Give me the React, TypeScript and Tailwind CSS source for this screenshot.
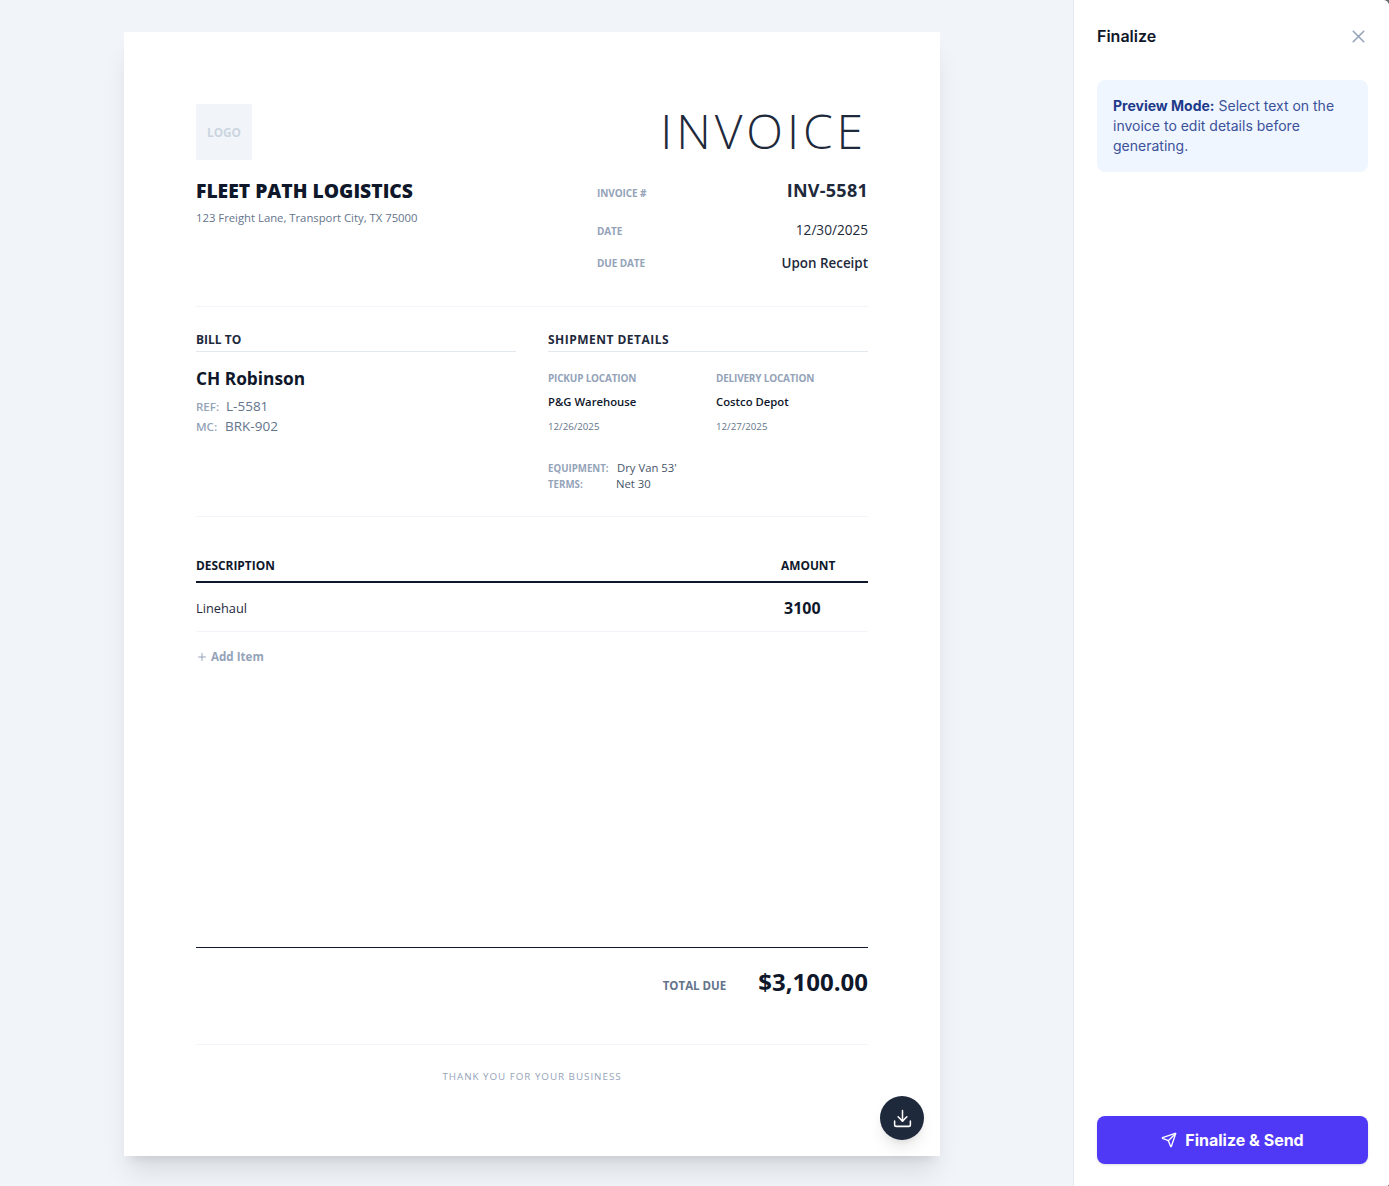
import { Download, Plus, Send, X } from "lucide-react";

const seg = "font-['Open_Sans',sans-serif]";

function MetaRow({ label, value, className, labelClass }: { label: string; value: string; className: string; labelClass: string }) {
    return (
        <div className={`flex items-center justify-between ${className}`}>
            <span className={`text-[10px] font-bold uppercase tracking-[-0.1px] text-[#94a3b8] ${labelClass}`}>{label}</span>
            <span className="text-[#1e293b]">{value}</span>
        </div>
    );
}

function Stop({ label, place, date }: { label: string; place: string; date: string }) {
    return (
        <div>
            <div className="text-[10px] font-bold uppercase leading-[14px] tracking-[-0.2px] text-[#94a3b8]">{label}</div>
            <div className="mt-[9px] text-[11.3px] font-semibold leading-[16px] text-[#0f172a]">{place}</div>
            <div className="mt-[9px] text-[9.7px] leading-[16px] text-[#64748b]">{date}</div>
        </div>
    );
}

export default function App() {
    return (
        <div className="h-[1186px] bg-[#6b6b6b]">
            <div className="flex h-full overflow-hidden rounded-tr-[6px] rounded-br-[3px] bg-[#f1f5f9]">
                <main className="w-[1073px] shrink-0 pl-[124px] pt-8">
                    <div className={`relative h-[1124px] w-[816px] bg-white px-[72px] pt-[72px] shadow-xl ${seg}`}>
                        {/* header */}
                        <div className="flex h-[203px] justify-between border-b border-[#f1f5f9]">
                            <div>
                                <div className="flex h-14 w-14 items-center justify-center bg-[#f1f5f9] pt-[1px] text-[11.8px] font-bold text-[#cbd5e1]">
                                    LOGO
                                </div>
                                <h1 className="mt-[17px] text-[19.3px] font-extrabold uppercase leading-7 text-[#0f172a]">
                                    Fleet Path Logistics
                                </h1>
                                <p className="mt-[5px] text-[11.3px] leading-4 text-[#64748b]">
                                    123 Freight Lane, Transport City, TX 75000
                                </p>
                            </div>
                            <div className="w-[271px]">
                                <div className="-mt-[1px] pr-[1px] text-right text-[48px] font-light leading-[56px] tracking-[3.9px] text-[#1e293b]">
                                    INVOICE
                                </div>
                                <MetaRow label="Invoice #" value="INV-5581" labelClass="pt-[8px]" className="mt-[17px] h-7 text-lg font-bold tracking-[0.25px]" />
                                <MetaRow label="Date" value="12/30/2025" labelClass="pt-[2px]" className="mt-[12px] h-[28px] text-[13.6px] font-medium" />
                                <MetaRow label="Due Date" value="Upon Receipt" labelClass="pt-[1px]" className="mt-[5px] h-[28px] text-[13.4px] font-semibold" />
                            </div>
                        </div>

                        {/* bill to / shipment */}
                        <div className="grid h-[210px] grid-cols-2 gap-8 border-b border-[#f1f5f9] pt-[25px]">
                            <div>
                                <h2 className="border-b border-[#e2e8f0] pb-[3px] text-xs font-bold uppercase leading-4 tracking-normal text-[#1e293b]">
                                    Bill To
                                </h2>
                                <div className="mt-[15px] text-[17.3px] font-bold leading-6 text-[#0f172a]">CH Robinson</div>
                                <div className="mt-[5px] text-[13.5px] leading-5 text-[#64748b]">
                                    <div className="flex items-baseline">
                                        <span className="mr-[7px] text-[11.5px] font-semibold text-[#94a3b8]">REF:</span>L-5581
                                    </div>
                                    <div className="-mt-[1px] flex items-baseline">
                                        <span className="mr-[8px] text-[11.5px] font-semibold text-[#94a3b8]">MC:</span>BRK-902
                                    </div>
                                </div>
                            </div>
                            <div>
                                <h2 className="border-b border-[#e2e8f0] pb-[3px] text-xs font-bold uppercase leading-4 tracking-[0.04em] text-[#1e293b]">
                                    Shipment Details
                                </h2>
                                <div className="mt-[19px] grid grid-cols-2 gap-4">
                                    <Stop label="Pickup Location" place="P&G Warehouse" date="12/26/2025" />
                                    <Stop label="Delivery Location" place="Costco Depot" date="12/27/2025" />
                                </div>
                                <div className="mt-[25px] text-[11.3px] leading-4 text-[#475569]">
                                    <div className="flex items-baseline">
                                        <span className="w-[69px] text-[9.7px] font-bold text-[#94a3b8]">EQUIPMENT:</span>Dry Van 53'
                                    </div>
                                    <div className="-mt-[1px] flex items-baseline">
                                        <span className="w-[68px] text-[9.7px] font-bold text-[#94a3b8]">TERMS:</span>Net 30
                                    </div>
                                </div>
                            </div>
                        </div>

                        {/* items */}
                        <div className="mt-8 flex h-[34px] items-start border-b-2 border-[#0f172a] text-[11.9px] font-bold uppercase leading-4 text-[#0f172a]">
                            <span className="flex-1 pt-[8px]">Description</span>
                            <span className="w-[87px] pt-[8px]">Amount</span>
                        </div>
                        <div className="flex h-[49px] items-center border-b border-[#f1f5f9] pt-[2px]">
                            <span className="flex-1 pt-[2px] text-[12.8px] text-[#1e293b]">Linehaul</span>
                            <span className="w-[84px] text-base font-bold text-[#0f172a]">3100</span>
                        </div>
                        <div className="mt-4 flex items-center gap-[3px] text-[11.6px] font-bold leading-[18px] text-[#94a3b8]">
                            <Plus size={12} />
                            Add Item
                        </div>

                        {/* totals */}
                        <div className="mt-[281px] flex h-[97px] items-start justify-end border-t border-[#0f172a] pt-[18px]">
                            <span className="mt-[12px] text-[11.5px] font-bold uppercase leading-4 text-[#64748b]">Total Due</span>
                            <span className="ml-8 text-2xl font-bold leading-8 text-[#0f172a]">$3,100.00</span>
                        </div>
                        <div className="border-t border-[#f1f5f9] pt-[24px] text-center text-[9.8px] uppercase leading-4 tracking-widest text-[#94a3b8]">
                            Thank you for your business
                        </div>

                        <button className="absolute bottom-4 right-4 flex h-11 w-11 items-center justify-center rounded-full bg-[#1e293b] text-white shadow-lg">
                            <Download size={21} strokeWidth={1.75} />
                        </button>
                    </div>
                </main>

                <aside className="flex h-full flex-1 flex-col border-l border-[#e2e8f0] bg-white pl-[23px] pr-[21px] font-['Inter',sans-serif]">
                    <div className="flex h-[72px] items-center justify-between">
                        <h2 className="text-base font-semibold text-[#0f172a]">Finalize</h2>
                        <X size={21} strokeWidth={1.75} className="-mr-[0.5px] text-[#94a3b8]" />
                    </div>
                    <div className="mt-2 rounded-lg bg-[#eff6ff] p-4 text-sm leading-5 text-[#3b5199]">
                        <b className="font-bold text-[#1e3a8a]">Preview Mode:</b> Select text on the invoice to edit details before generating.
                    </div>
                    <button className="mt-auto mb-[22px] flex h-12 items-center justify-center gap-2 rounded-lg bg-[#4f39f6] text-base font-bold text-white shadow-sm">
                        <Send size={16} />
                        Finalize &amp; Send
                    </button>
                </aside>
            </div>
        </div>
    );
}
